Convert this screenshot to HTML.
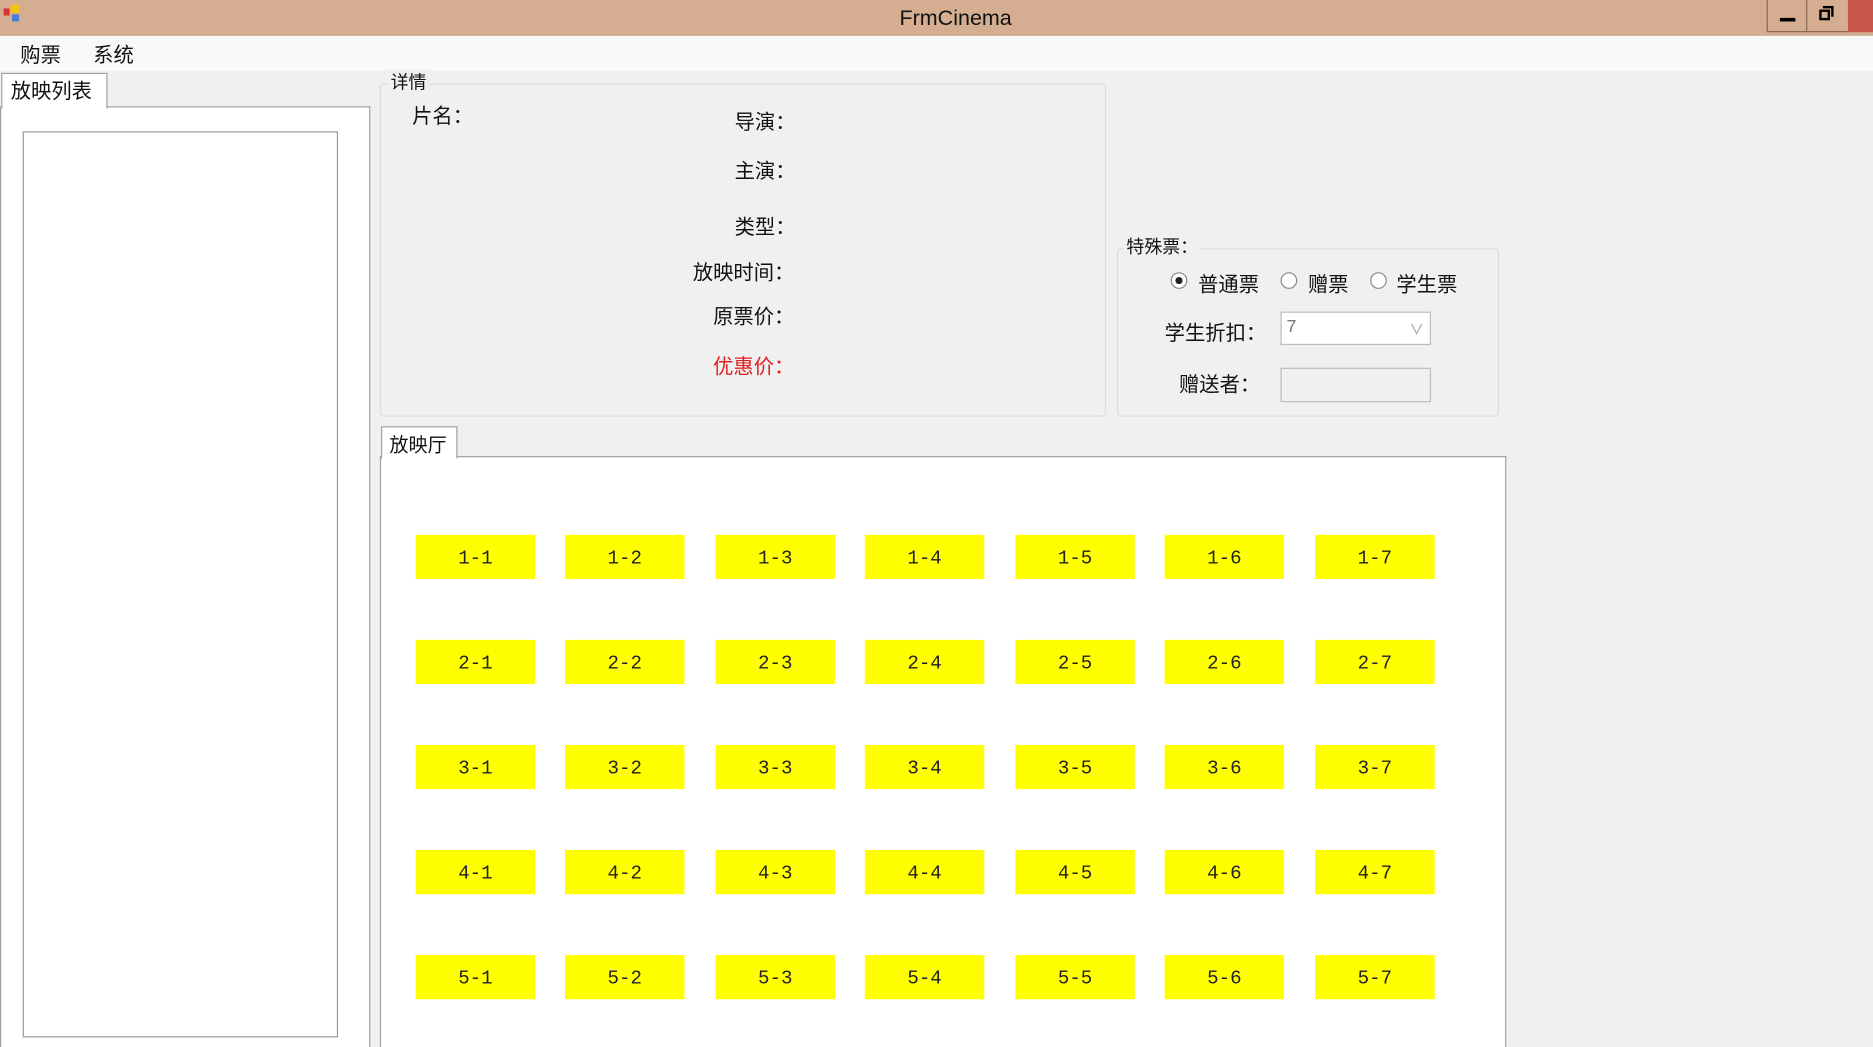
<!DOCTYPE html>
<html><head><meta charset="utf-8"><style>
html,body{margin:0;padding:0;width:1873px;height:1047px;overflow:hidden;background:#f0f0f0}
#w{position:absolute;left:0;top:0;width:1568px;height:877px;overflow:hidden;transform:scale(1.19452,1.19384);transform-origin:0 0;font-family:"Liberation Sans","Noto Sans CJK SC",sans-serif;color:#111}
.a{position:absolute}
.t{position:absolute;font-size:17px;white-space:nowrap}
.seat{position:absolute;width:100px;height:37px;background:#ffff00;font-family:"Liberation Mono",monospace;font-size:16px;line-height:40px;text-align:center;color:#222}
</style></head><body><div id="w">
<div class="a" style="left:0;top:0;width:1568px;height:29px;background:#d5ae92;border-bottom:1px solid #c9a488"></div>
<div class="a" style="left:3px;top:7px;width:5px;height:6px;background:#d33"></div>
<div class="a" style="left:9px;top:4px;width:7px;height:7px;background:#f2c40c"></div>
<div class="a" style="left:10px;top:12px;width:6px;height:6px;background:#4a7fd8"></div>
<div class="t" style="left:753px;top:5px;font-size:18px">FrmCinema</div>
<div class="a" style="left:1479px;top:0;width:34px;height:27px;border:1px solid #8a6a55;border-top:none;box-sizing:border-box"></div>
<div class="a" style="left:1490px;top:15px;width:13px;height:3px;background:#000"></div>
<div class="a" style="left:1513px;top:0;width:34px;height:27px;border-bottom:1px solid #8a6a55;box-sizing:border-box"></div>
<div class="a" style="left:1523px;top:8px;width:9px;height:9px;border:2px solid #000;box-sizing:border-box"></div>
<div class="a" style="left:1526px;top:5px;width:9px;height:9px;border-top:2px solid #000;border-right:2px solid #000;box-sizing:border-box"></div>
<div class="a" style="left:1547px;top:0;width:21px;height:27px;background:#c7574b"></div>
<div class="a" style="left:0;top:30px;width:1568px;height:29px;background:linear-gradient(#f7f7f7,#fafafa)"></div>
<div class="t" style="left:17px;top:32px">购票</div>
<div class="t" style="left:78px;top:32px">系统</div>
<div class="a" style="left:0;top:89px;width:310px;height:788px;background:#fff;border:1px solid #a0a0a0;border-bottom:none;box-sizing:border-box"></div>
<div class="a" style="left:1px;top:61px;width:89px;height:30px;background:#fff;border:1px solid #a0a0a0;border-bottom:none;box-sizing:border-box"></div>
<div class="t" style="left:9px;top:62px">放映列表</div>
<div class="a" style="left:19px;top:110px;width:264px;height:759px;border:1px solid #999;box-sizing:border-box;background:#fff"></div>
<div class="a" style="left:318px;top:70px;width:608px;height:279px;border:1px solid #dcdcdc;border-radius:3px;box-sizing:border-box"></div>
<div class="t" style="left:325px;top:58px;font-size:15px;background:#f0f0f0;padding:0 2px">详情</div>
<div class="t" style="left:345px;top:83px">片名：</div>
<div class="t" style="left:615px;top:88px">导演：</div>
<div class="t" style="left:615px;top:129px">主演：</div>
<div class="t" style="left:615px;top:176px">类型：</div>
<div class="t" style="left:580px;top:214px">放映时间：</div>
<div class="t" style="left:597px;top:251px">原票价：</div>
<div class="t" style="left:597px;top:293px;color:#e02020">优惠价：</div>
<div class="a" style="left:935px;top:208px;width:320px;height:141px;border:1px solid #dcdcdc;border-radius:3px;box-sizing:border-box"></div>
<div class="t" style="left:941px;top:196px;font-size:15px;background:#f0f0f0;padding:0 2px">特殊票：</div>
<div class="a" style="left:980px;top:228px;width:14px;height:14px;border:1px solid #888;border-radius:50%;background:#fff;box-sizing:border-box"></div>
<div class="a" style="left:984px;top:232px;width:6px;height:6px;border-radius:50%;background:#222"></div>
<div class="t" style="left:1003px;top:224px">普通票</div>
<div class="a" style="left:1072px;top:228px;width:14px;height:14px;border:1px solid #888;border-radius:50%;background:#fff;box-sizing:border-box"></div>
<div class="t" style="left:1095px;top:224px">赠票</div>
<div class="a" style="left:1147px;top:228px;width:14px;height:14px;border:1px solid #888;border-radius:50%;background:#fff;box-sizing:border-box"></div>
<div class="t" style="left:1169px;top:224px">学生票</div>
<div class="t" style="left:975px;top:265px">学生折扣：</div>
<div class="a" style="left:1072px;top:261px;width:126px;height:28px;border:1px solid #bbb;background:#fff;box-sizing:border-box"></div>
<div class="t" style="left:1077px;top:265px;font-size:15px;color:#777">7</div>
<div class="t" style="left:1180px;top:267px;font-size:12px;color:#999">∨</div>
<div class="t" style="left:987px;top:308px">赠送者：</div>
<div class="a" style="left:1072px;top:308px;width:126px;height:29px;border:1px solid #bbb;background:#f0f0f0;box-sizing:border-box"></div>
<div class="a" style="left:318px;top:382px;width:943px;height:495px;background:#fff;border:1px solid #a0a0a0;border-bottom:none;box-sizing:border-box"></div>
<div class="a" style="left:319px;top:357px;width:64px;height:27px;background:#fff;border:1px solid #a0a0a0;border-bottom:none;box-sizing:border-box"></div>
<div class="t" style="left:326px;top:359px;font-size:16px">放映厅</div>
<div class="seat" style="left:348px;top:448px">1-1</div><div class="seat" style="left:473px;top:448px">1-2</div><div class="seat" style="left:599px;top:448px">1-3</div><div class="seat" style="left:724px;top:448px">1-4</div><div class="seat" style="left:850px;top:448px">1-5</div><div class="seat" style="left:975px;top:448px">1-6</div><div class="seat" style="left:1101px;top:448px">1-7</div>
<div class="seat" style="left:348px;top:536px">2-1</div><div class="seat" style="left:473px;top:536px">2-2</div><div class="seat" style="left:599px;top:536px">2-3</div><div class="seat" style="left:724px;top:536px">2-4</div><div class="seat" style="left:850px;top:536px">2-5</div><div class="seat" style="left:975px;top:536px">2-6</div><div class="seat" style="left:1101px;top:536px">2-7</div>
<div class="seat" style="left:348px;top:624px">3-1</div><div class="seat" style="left:473px;top:624px">3-2</div><div class="seat" style="left:599px;top:624px">3-3</div><div class="seat" style="left:724px;top:624px">3-4</div><div class="seat" style="left:850px;top:624px">3-5</div><div class="seat" style="left:975px;top:624px">3-6</div><div class="seat" style="left:1101px;top:624px">3-7</div>
<div class="seat" style="left:348px;top:712px">4-1</div><div class="seat" style="left:473px;top:712px">4-2</div><div class="seat" style="left:599px;top:712px">4-3</div><div class="seat" style="left:724px;top:712px">4-4</div><div class="seat" style="left:850px;top:712px">4-5</div><div class="seat" style="left:975px;top:712px">4-6</div><div class="seat" style="left:1101px;top:712px">4-7</div>
<div class="seat" style="left:348px;top:800px">5-1</div><div class="seat" style="left:473px;top:800px">5-2</div><div class="seat" style="left:599px;top:800px">5-3</div><div class="seat" style="left:724px;top:800px">5-4</div><div class="seat" style="left:850px;top:800px">5-5</div><div class="seat" style="left:975px;top:800px">5-6</div><div class="seat" style="left:1101px;top:800px">5-7</div>
</div></body></html>
